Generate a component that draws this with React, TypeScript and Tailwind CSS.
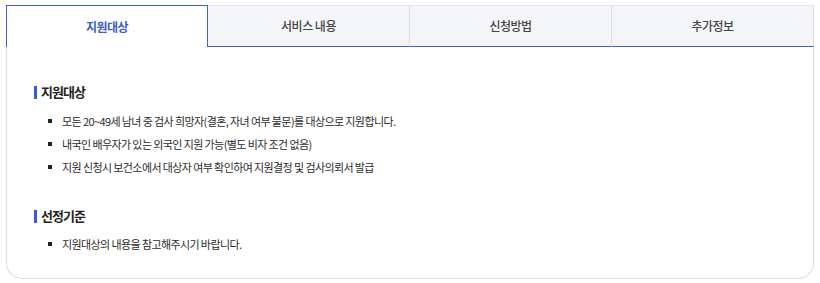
export default function App() {
  const tabs = ["지원대상", "서비스 내용", "신청방법", "추가정보"];
  const font = { fontFamily: '"Noto Sans CJK KR", "Noto Sans", sans-serif' };
  return (
    <div className="bg-white w-[820px] h-[283px] pt-[5px] px-[6px]" style={font}>
      <div className="w-[808px]">
        <div className="grid grid-cols-4 h-[42px]">
          {tabs.map((t, i) =>
            i === 0 ? (
              <div
                key={t}
                className="flex items-center justify-center border-t border-l border-r border-[#3a62d7] bg-white text-[12px] font-bold text-[#3a5bd0] tracking-[-0.5px]"
              >
                {t}
              </div>
            ) : (
              <div
                key={t}
                className="flex items-center justify-center border-t border-r border-[#e2e3e8] border-r-[#dcdde2] border-b border-b-[#3a62d7] bg-[#f4f5f9] text-[12px] font-medium text-[#444] tracking-[-0.5px]"
              >
                {t}
              </div>
            )
          )}
        </div>
        <div className="border-l border-r border-b border-[#dedede] rounded-b-[16px] h-[232px] pl-[27px] pt-[37px]">
          <div className="flex items-center gap-[4px]">
            <span className="w-[3px] h-[13px] bg-[#3a5bd7]" />
            <h3 className="text-[13px] font-bold text-[#222] tracking-[-1px] leading-[16px]">지원대상</h3>
          </div>
          <ul className="mt-[13px] pl-[14px] flex flex-col gap-[7px]">
            {[
              "모든 20~49세 남녀 중 검사 희망자(결혼, 자녀 여부 불문)를 대상으로 지원합니다.",
              "내국인 배우자가 있는 외국인 지원 가능(별도 비자 조건 없음)",
              "지원 신청시 보건소에서 대상자 여부 확인하여 지원결정 및 검사의뢰서 발급",
            ].map((s) => (
              <li key={s} className="flex items-center h-[16px] text-[11px] text-[#2b2b2b] tracking-[-0.6px]">
                <span className="w-[4px] h-[4px] bg-[#222] mr-[10px]" />
                {s}
              </li>
            ))}
          </ul>
          <div className="flex items-center gap-[4px] mt-[33px]">
            <span className="w-[3px] h-[13px] bg-[#3a5bd7]" />
            <h3 className="text-[13px] font-bold text-[#222] tracking-[-1px] leading-[16px]">선정기준</h3>
          </div>
          <ul className="mt-[12px] pl-[14px] flex flex-col gap-[7px]">
            <li className="flex items-center h-[16px] text-[11px] text-[#2b2b2b] tracking-[-0.6px]">
              <span className="w-[4px] h-[4px] bg-[#222] mr-[10px]" />
              지원대상의 내용을 참고해주시기 바랍니다.
            </li>
          </ul>
        </div>
      </div>
    </div>
  );
}
